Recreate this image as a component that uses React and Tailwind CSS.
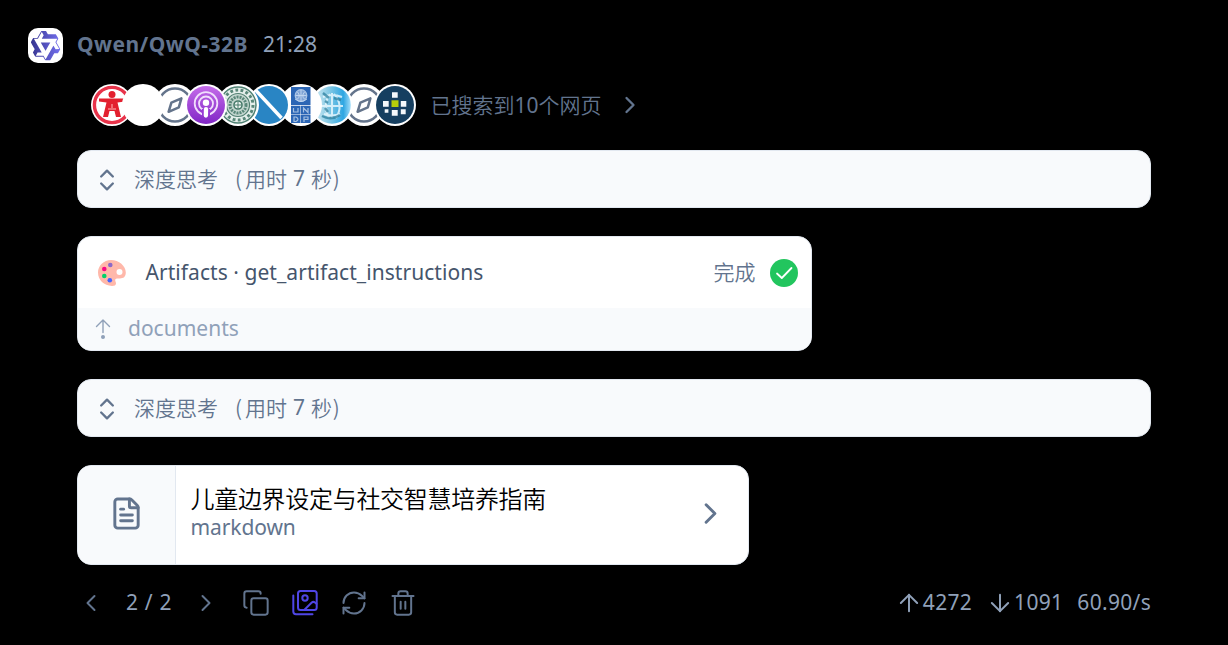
import { ChevronLeft, ChevronRight, ChevronsUpDown, Copy, RefreshCw, Trash2, FileText, ArrowUp, ArrowDown } from "lucide-react";

const latin = "font-['Noto_Sans','Noto_Sans_CJK_SC',sans-serif]";
const cjk = "font-['Noto_Sans_CJK_SC',sans-serif] font-[350]";

function QwenLogo() {
  return (
    <svg viewBox="0 0 35 35" className="size-[35px] shrink-0 rounded-[10px] bg-white">
      <defs>
        <linearGradient id="qw" x1="0" x2="1">
          <stop offset="0" stopColor="#35348f" />
          <stop offset="1" stopColor="#7470ee" />
        </linearGradient>
      </defs>
      <path
        transform="translate(1.6 1.6) scale(1.33)"
        fill="url(#qw)"
        d="M12.604 1.34c.393.69.784 1.382 1.174 2.075a.18.18 0 00.157.091h5.552c.174 0 .322.11.446.327l1.454 2.57c.19.337.24.478.024.837-.26.43-.513.864-.76 1.3l-.367.658c-.106.196-.223.28-.04.512l2.652 4.637c.172.301.111.494-.043.77-.437.785-.882 1.564-1.335 2.34-.159.272-.352.375-.68.37-.777-.016-1.552-.01-2.327.016a.099.099 0 00-.081.05 575.097 575.097 0 01-2.705 4.74c-.169.293-.38.363-.725.364-.997.003-2.002.004-3.017.002a.537.537 0 01-.465-.271l-1.335-2.323a.09.09 0 00-.083-.049H4.982c-.285.03-.553-.001-.805-.092l-1.603-2.77a.543.543 0 01-.002-.54l1.207-2.12a.198.198 0 000-.197 550.951 550.951 0 01-1.875-3.272l-.79-1.395c-.16-.31-.173-.496.095-.965.465-.813.927-1.625 1.387-2.436.132-.234.304-.334.584-.335a338.3 338.3 0 012.589-.001.124.124 0 00.107-.063l2.806-4.895a.488.488 0 01.422-.246c.524-.001 1.053 0 1.583-.006L11.704 1c.341-.003.724.032.9.34zm-3.432.403a.06.06 0 00-.052.03L6.254 6.788a.157.157 0 01-.135.078H3.253c-.056 0-.07.025-.041.074l5.81 10.156c.025.042.013.062-.034.063l-2.795.015a.218.218 0 00-.2.116l-1.32 2.31c-.044.078-.021.118.068.118l5.716.008c.046 0 .08.02.104.061l1.403 2.454c.046.081.092.082.139 0l5.006-8.76.783-1.382a.055.055 0 01.096 0l1.424 2.53a.122.122 0 00.107.062l2.763-.02a.04.04 0 00.035-.02.041.041 0 000-.04l-2.9-5.086a.108.108 0 010-.113l.293-.507 1.12-1.977c.024-.041.012-.062-.035-.062H9.2c-.059 0-.073-.026-.043-.077l1.434-2.505a.107.107 0 000-.114L9.225 1.774a.06.06 0 00-.053-.031zm6.29 8.02c.046 0 .058.02.034.06l-.832 1.465-2.613 4.585a.056.056 0 01-.05.029.058.058 0 01-.05-.029L8.498 9.841c-.02-.034-.01-.052.028-.054l.216-.012 6.722-.012z"
      />
    </svg>
  );
}

function Compass() {
  return (
    <>
      <circle cx="21" cy="21" r="16.5" fill="none" stroke="#64748b" strokeWidth="2.6" />
      <path d="M27.4 14.4 L24.8 23.4 L14.6 27.8 L17.4 18.6 Z" fill="none" stroke="#64748b" strokeWidth="2.5" strokeLinejoin="round" />
    </>
  );
}

const sites = [
  {
    z: "z-0",
    art: (
      <>
        <circle cx="21" cy="21" r="17.6" fill="#fff" stroke="#e8334a" strokeWidth="3.4" />
        <circle cx="21" cy="10.5" r="3.5" fill="#e3202f" />
        <path d="M8 14.5 H34 V17.5 L26.5 18.5 L30 33 H25 L23.5 27 H18.5 L17 33 H12 L15.5 18.5 L8 17.5 Z" fill="#e3202f" />
        <path d="M17 25 H25 M21 20 V24" stroke="#fbb" strokeWidth="1" />
      </>
    ),
  },
  { z: "z-10", art: null },
  { z: "z-0", art: <Compass /> },
  {
    z: "z-50",
    art: (
      <>
        <circle cx="21" cy="21" r="19" fill="url(#pod)" />
        <circle cx="21" cy="19.5" r="11.3" fill="none" stroke="#f1defc" strokeWidth="1.8" />
        <circle cx="21" cy="19.5" r="7" fill="none" stroke="#f1defc" strokeWidth="1.8" />
        <path d="M21 25 V32" stroke="#9838d6" strokeWidth="8" />
        <circle cx="21" cy="18.7" r="3.2" fill="#fff" />
        <path d="M21 25.2 L20.9 31.5" stroke="#fff" strokeWidth="4.3" strokeLinecap="round" />
      </>
    ),
  },
  {
    z: "z-40",
    art: (
      <>
        <circle cx="21" cy="21" r="18" fill="#e5efeb" stroke="#4f8173" strokeWidth="1.5" />
        <circle cx="21" cy="21" r="15" fill="none" stroke="#598779" strokeWidth="3" strokeDasharray="2.8 2.4" />
        <circle cx="21" cy="21" r="11.5" fill="#c4d6cf" stroke="#528072" strokeWidth="1.2" />
        <circle cx="21" cy="21" r="8" fill="none" stroke="#598779" strokeWidth="3" strokeDasharray="2 1" />
        <circle cx="21" cy="21" r="4" fill="#eef6f2" stroke="#487b6b" strokeWidth="1.6" />
        <path d="M21 18 V24 M18 21 H24" stroke="#487b6b" strokeWidth="1" />
      </>
    ),
  },
  {
    z: "z-30",
    art: (
      <>
        <circle cx="21" cy="21" r="19" fill="#2985c4" />
        <path d="M7.5 6 L33.5 34" stroke="#fff" strokeWidth="3.4" />
      </>
    ),
  },
  {
    z: "z-20",
    art: (
      <>
        <path d="M11 3 H30.5 V21 H11 Z M11 21.7 H20.5 V30 H11 Z M21 21.7 H30.5 V30 H21 Z M11 30.6 H20.5 V39 H11 Z M21 30.6 H30.5 V39 H21 Z" fill="#2c66b5" />
        <circle cx="21" cy="11.5" r="5.8" fill="#7fa3d5" stroke="#a9c4e6" strokeWidth="1.2" />
        <path d="M15.5 11.5 H26.5 M21 6 V17 M17.5 8 Q21 12 17.5 15 M24.5 8 Q21 12 24.5 15 M15 15 Q21 20 27 15" fill="none" stroke="#c5d9f0" strokeWidth=".9" />
        <path d="M13.5 24 V28 H18 V24 M23.5 28.5 V24 L28 28.5 V24 M14 33 V37.5 H16 Q20 35.2 16 33 Z M24 38 V33 H28 V35.5 H24" fill="none" stroke="#a5c0e2" strokeWidth="1.2" />
      </>
    ),
  },
  {
    z: "z-10",
    art: (
      <>
        <circle cx="21" cy="21" r="18.8" fill="url(#globe)" />
        <path d="M12 13 Q21 9 31 13 M10 22 H32 M13 30 Q21 33 29 30 M19 10 Q11 21 18 34 M23 10 Q33 21 25 34 M21 9 V34" fill="none" stroke="#eefaff" strokeOpacity=".8" strokeWidth="2" />
        <path d="M12 9 L18 14 M14 17 L17 19 M23 14 L30 16 M11 32 Q20 37 29 31 M14 24 L17 28" fill="none" stroke="#2b7f9e" strokeOpacity=".75" strokeWidth="2.4" />
      </>
    ),
  },
  { z: "z-0", art: <Compass /> },
  {
    z: "z-50",
    art: (
      <>
        <circle cx="21" cy="21" r="19" fill="#163f60" />
        <path d="M18 8.3 H23.7 V13.7 H18 Z M9 17 H14.7 V22.7 H9 Z M26.8 17 H32.3 V22.7 H26.8 Z M10.7 25.3 H14.4 V28.8 H10.7 Z M17.8 26 H23.7 V31.8 H17.8 Z M26.8 25.2 H31.7 V30.2 H26.8 Z" fill="#f5f8fb" />
        <path d="M17.5 16.3 H24.5 V23 H17.5 Z" fill="#b7cf0a" />
      </>
    ),
  },
];

function Sites() {
  return (
    <div className="isolate flex pl-[14px]">
      <svg className="absolute size-0">
        <defs>
          <linearGradient id="pod" x1="0" y1="0" x2="0" y2="1">
            <stop offset="0" stopColor="#c46be9" />
            <stop offset="1" stopColor="#8127c6" />
          </linearGradient>
          <linearGradient id="globe">
            <stop offset="0" stopColor="#d9edf4" />
            <stop offset=".45" stopColor="#7cc6e4" />
            <stop offset=".8" stopColor="#2ea6e2" />
            <stop offset="1" stopColor="#a5def9" />
          </linearGradient>
        </defs>
      </svg>
      {sites.map(({ z, art }, i) => (
        <svg key={i} viewBox="0 0 42 42" className={"relative -mr-[10.55px] size-[42px] shrink-0 " + z}>
          <circle cx="21" cy="21" r="21" fill="#fff" />
          {art}
        </svg>
      ))}
    </div>
  );
}

function Thinking({ className }) {
  return (
    <div className={"flex h-[58px] w-[1074px] items-center rounded-[14px] border border-slate-200 bg-slate-50 pl-[14.5px] text-slate-500 " + className}>
      <ChevronsUpDown size={28} strokeWidth={2} className="mt-[1px]" />
      <span className={cjk + " mb-[2px] ml-[13.5px] w-[84px] text-[21px] leading-[28px] whitespace-nowrap"}>深度思考</span>
      <span className={cjk + " mb-[2px] ml-[17px] flex text-[21px] leading-[28px] whitespace-nowrap"}>
        <span className="w-[10px]">(</span>
        <span>用时</span>
        <span className={latin + " mx-[6px] font-normal"}>7</span>
        <span className="tracking-[0.8px]">秒)</span>
      </span>
    </div>
  );
}

function Palette() {
  return (
    <svg viewBox="0 0 28 26" className="h-[26px] w-[28px]">
      <path fillRule="evenodd" d="M13 0 C21 0 27.8 6 27.8 12.5 C27.8 17 25.3 18.4 22 18.4 C19 18.4 17.2 18.2 17.2 20 C17.2 21.5 18 22 18 23.5 C18 25.2 16.5 26 14 26 C6 26 0 19.8 0 12.6 C0 5.6 5.8 0 13 0 Z M21.5 9 A3 3 0 1 0 21.5 15 A3 3 0 1 0 21.5 9 Z" fill="#ffb8aa" />
      <circle cx="12.3" cy="5" r="2.3" fill="#8c68c8" />
      <circle cx="6.3" cy="9" r="2.3" fill="#f90a87" />
      <circle cx="6.3" cy="16" r="2.3" fill="#00d26a" />
      <circle cx="11.8" cy="20.3" r="2.3" fill="#4463ff" />
    </svg>
  );
}

function Images() {
  return (
    <svg viewBox="0 0 28 28" className="size-[28px] fill-none stroke-[#4f46e5] stroke-[2]" strokeLinecap="round" strokeLinejoin="round">
      <rect x="7" y="2" width="18.7" height="19" rx="2.5" />
      <circle cx="14" cy="9" r="2.7" />
      <path d="M13.5 20.7 L20.5 13.7 Q22.2 12.2 24 13.5 L25.5 14.8 M2.3 6.5 V22.5 Q2.3 25.2 5 25.2 H21.5" />
    </svg>
  );
}

export default function App() {
  return (
    <main className={latin + " flex h-[645px] w-[1228px] flex-col overflow-hidden bg-black pl-[77px] text-slate-500"}>
      <header className="mt-[28px] -ml-[49px] flex h-[35px] items-center">
        <QwenLogo />
        <span className="mb-[3px] ml-[14px] w-[171px] text-[21px] leading-[28px] font-bold tracking-[0.45px] whitespace-nowrap">Qwen/QwQ-32B</span>
        <span className="mb-[3px] ml-[15px] text-[21px] leading-[28px] tracking-[0.1px] text-slate-400">21:28</span>
      </header>

      <div className="mt-[21px] flex h-[42px] items-center">
        <Sites />
        <span className={cjk + " mb-[2px] ml-[25px] w-[171px] text-[21px] leading-[28px] whitespace-nowrap"}>
          已搜索到<span className={latin + " font-normal"}>10</span>个网页
        </span>
        <ChevronRight size={28} strokeWidth={2} className="ml-[14px]" />
      </div>

      <Thinking className="mt-[24px]" />

      <section className="mt-[28px] flex h-[115px] w-[734.5px] flex-col overflow-hidden rounded-[14px] border border-slate-200 bg-white">
        <div className="flex h-[71px] items-center pr-[13px] pl-[20px]">
          <Palette />
          <span className="mb-[2px] ml-[19.5px] text-[21px] leading-[28px] tracking-[0.05px] whitespace-nowrap text-slate-600">Artifacts · get_artifact_instructions</span>
          <span className={cjk + " mb-[3px] ml-auto text-[21px] leading-[28px]"}>完成</span>
          <svg viewBox="0 0 28 28" className="ml-[14px] size-[28px]">
            <circle cx="14" cy="14" r="14" fill="#22c55e" />
            <path d="M7 14.5 L11.8 19 L21.5 9" fill="none" stroke="#fff" strokeWidth="1.8" strokeLinecap="round" strokeLinejoin="round" />
          </svg>
        </div>
        <div className="flex flex-1 items-center bg-slate-50 pl-[17px] text-slate-400">
          <svg viewBox="0 0 16 20" className="h-[20px] w-[16px] fill-none stroke-slate-400 stroke-[1.4]" strokeLinecap="round" strokeLinejoin="round">
            <path d="M1.5 7.5 L8 1 L14.5 7.5 M8 1 V13.5" />
            <circle cx="8" cy="18" r="1.3" className="fill-slate-400" />
          </svg>
          <span className="mb-[2px] ml-[17px] text-[21px] leading-[28px] tracking-[0px]">documents</span>
        </div>
      </section>

      <Thinking className="mt-[28px]" />

      <section className="mt-[28px] flex h-[100px] w-[671.5px] overflow-hidden rounded-[14px] border border-slate-200 bg-white">
        <div className="flex w-[98px] items-center justify-center border-r border-slate-200 bg-slate-50 pb-[3px]">
          <FileText size={35} strokeWidth={2} />
        </div>
        <div className="flex flex-col pt-[17px] pl-[14.5px]">
          <span className={cjk + " h-[30px] text-[24px] leading-[30px] tracking-[-0.3px] whitespace-nowrap text-black"}>儿童边界设定与社交智慧培养指南</span>
          <span className="text-[21px] leading-[28px] tracking-[-0.1px]">markdown</span>
        </div>
        <ChevronRight size={35} strokeWidth={2} className="mr-[20px] mb-[3px] ml-auto self-center" />
      </section>

      <footer className="mt-[22px] flex h-[31px] w-[1074px] items-center text-[21px] leading-[28px]">
        <ChevronLeft size={28} strokeWidth={1.7} />
        <span className="mb-[1px] ml-[21px] w-[46px] tracking-[0.7px] whitespace-nowrap text-slate-400">2 / 2</span>
        <ChevronRight size={28} strokeWidth={1.7} className="ml-[20px]" />
        <div className="ml-[21.5px] flex gap-[21px]">
          <Copy size={28} strokeWidth={1.7} />
          <Images />
          <RefreshCw size={28} strokeWidth={1.7} />
          <Trash2 size={28} strokeWidth={1.7} />
        </div>
        <div className="ml-auto flex items-center tracking-[0.3px] text-slate-400">
          <ArrowUp size={28} strokeWidth={1.7} />
          <span className="mb-[2px]">4272</span>
          <ArrowDown size={28} strokeWidth={1.7} className="ml-[14px]" />
          <span className="mb-[2px]">1091</span>
          <span className="mb-[2px] ml-[14px]">60.90/s</span>
        </div>
      </footer>
    </main>
  );
}
